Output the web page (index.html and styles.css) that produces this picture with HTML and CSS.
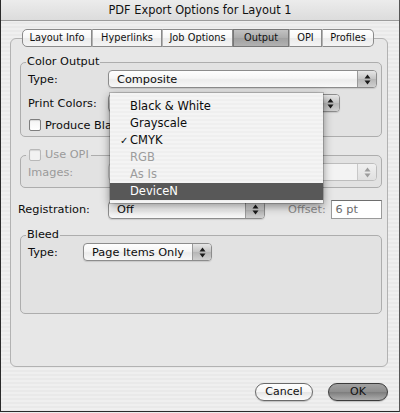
FILE: index.html
```html
<!DOCTYPE html>
<html>
<head>
<meta charset="utf-8">
<title>PDF Export Options for Layout 1</title>
<link rel="stylesheet" href="styles.css">
</head>
<body>
<div class="window">
  <div class="titlebar">PDF Export Options for Layout 1</div>
  <div class="content">
    <div class="tabs">
      <span class="tab first t-layout">Layout Info</span>
      <span class="tab t-hyper">Hyperlinks</span>
      <span class="tab t-job">Job Options</span>
      <span class="tab sel t-output">Output</span>
      <span class="tab t-opi">OPI</span>
      <span class="tab last t-prof">Profiles</span>
    </div>
    <div class="panel">
      <fieldset class="group g-color">
        <legend>Color Output</legend>
        <div class="row r-first">
          <span class="lbl">Type:</span>
          <div class="popup grow"><span class="ptext">Composite</span><span class="arrows"><svg width="7" height="11" viewBox="0 0 7 11"><path d="M3.5 0.5 L6.5 4.5 H0.5Z M3.5 10.5 L6.5 6.5 H0.5Z"/></svg></span></div>
        </div>
        <div class="row r-next">
          <span class="lbl">Print Colors:</span>
          <div class="popup w-print"><span class="ptext"></span><span class="arrows"><svg width="7" height="11" viewBox="0 0 7 11"><path d="M3.5 0.5 L6.5 4.5 H0.5Z M3.5 10.5 L6.5 6.5 H0.5Z"/></svg></span></div>
        </div>
        <div class="check-row">
          <span class="checkbox"></span><span>Produce Bla</span>
        </div>
      </fieldset>

      <fieldset class="group g-opi">
        <legend class="legend-check"><span class="checkbox dis"></span><span class="dis-text">Use OPI</span></legend>
        <div class="row r-first">
          <span class="lbl dis-text">Images:</span>
          <div class="popup grow disabled"><span class="ptext"></span><span class="arrows"><svg width="7" height="11" viewBox="0 0 7 11"><path d="M3.5 0.5 L6.5 4.5 H0.5Z M3.5 10.5 L6.5 6.5 H0.5Z"/></svg></span></div>
        </div>
      </fieldset>

      <div class="reg-row">
        <span class="lbl lbl-reg">Registration:</span>
        <div class="popup w-off"><span class="ptext">Off</span><span class="arrows"><svg width="7" height="11" viewBox="0 0 7 11"><path d="M3.5 0.5 L6.5 4.5 H0.5Z M3.5 10.5 L6.5 6.5 H0.5Z"/></svg></span></div>
        <span class="offset-lbl">Offset:</span>
        <div class="field">6 pt</div>
      </div>

      <fieldset class="group g-bleed">
        <legend>Bleed</legend>
        <div class="row r-first">
          <span class="lbl lbl-short">Type:</span>
          <div class="popup w-bleed"><span class="ptext">Page Items Only</span><span class="arrows"><svg width="7" height="11" viewBox="0 0 7 11"><path d="M3.5 0.5 L6.5 4.5 H0.5Z M3.5 10.5 L6.5 6.5 H0.5Z"/></svg></span></div>
        </div>
      </fieldset>
    </div>
    <div class="buttons">
      <button class="btn b-cancel">Cancel</button>
      <button class="btn default b-ok">OK</button>
    </div>
  </div>

  <div class="menu">
    <div class="item">Black &amp; White</div>
    <div class="item">Grayscale</div>
    <div class="item"><span class="check">✓</span>CMYK</div>
    <div class="item dis">RGB</div>
    <div class="item dis">As Is</div>
    <div class="item hl">DeviceN</div>
  </div>
</div>
</body>
</html>
```

FILE: styles.css
```css
* { box-sizing: border-box; }

html, body {
  margin: 0;
  padding: 0;
  background: #ececec;
}

body {
  font-family: "DejaVu Sans", "Liberation Sans", sans-serif;
  font-size: 11.3px;
  color: #0c0c0c;
}

.window {
  position: relative;
  width: 400px;
  height: 412px;
  border-left: 1px solid #2a2a2a;
  border-right: 1px solid #555;
  border-bottom: 1px solid #2a2a2a;
  background: repeating-linear-gradient(to bottom, #efefef 0 2px, #e9e9e9 2px 4px);
  display: flex;
  flex-direction: column;
}

.titlebar {
  height: 21px;
  line-height: 20px;
  text-align: center;
  font-size: 11.4px;
  color: #111;
  background: linear-gradient(#ececec, #dcdcdc);
  border-bottom: 1px solid #9c9c9c;
}

.content {
  padding: 8px 11px 0 9px;
  display: flex;
  flex-direction: column;
}

/* Tabs */
.tabs {
  display: flex;
  justify-content: center;
  padding-right: 2px;
  height: 18px;
  margin-bottom: -9px;
  position: relative;
  z-index: 1;
}

.tab {
  height: 18px;
  line-height: 16px;
  font-size: 9.8px;
  text-align: center;
  border: 1px solid #8a8a8a;
  border-left: 1px solid #b4b4b4;
  background: linear-gradient(#ffffff, #f6f6f6 50%, #ebebeb 52%, #f4f4f4);
  color: #111;
}
.tab.first { border-left: 1px solid #8a8a8a; border-radius: 5px 0 0 5px; }
.tab.last { border-radius: 0 5px 5px 0; }
.tab.sel {
  background: linear-gradient(#c2c2c2, #ababab 50%, #a0a0a0 52%, #b2b2b2);
  border-color: #777;
}
.t-layout { width: 70px; }
.t-hyper { width: 70px; }
.t-job { width: 71px; }
.t-output { width: 56px; }
.t-opi { width: 33px; }
.t-prof { width: 52px; }

/* Panel */
.panel {
  height: 329px;
  border: 1px solid #b2b2b2;
  border-radius: 6px;
  background: #e7e7e7;
  padding: 16px 5px 0 9px;
}

fieldset.group {
  margin: 0;
  min-width: 0;
  border: 1px solid #adadad;
  border-radius: 5px;
  background: #e2e2e2;
  padding: 0 4px 4px 7px;
}

fieldset.group legend {
  padding: 0 1px;
  margin-left: -2px;
  height: 14px;
  line-height: 14px;
}

.legend-check {
  display: flex;
  align-items: center;
}
fieldset.group legend.legend-check { padding: 0 2px 0 3px; }
.legend-check .checkbox { margin-right: 4px; }

.g-opi { margin-top: 11px !important; padding-bottom: 6px !important; }
.g-bleed { margin-top: 9px !important; padding-bottom: 52px !important; }

.row {
  display: flex;
  align-items: center;
  height: 18px;
}
.r-first { margin-top: 1px; }
.r-next { margin-top: 6px; }

.lbl { width: 80px; flex: none; }
.lbl-short { width: 55px; }
.lbl-reg { width: 90px; }

.dis-text { color: #9a9a9a; }

.check-row {
  display: flex;
  align-items: center;
  height: 14px;
  margin-top: 6px;
}
.check-row .checkbox { margin-left: 1px; margin-right: 4px; }

.checkbox {
  display: inline-block;
  width: 12px;
  height: 12px;
  border: 1px solid #7e7e7e;
  border-radius: 2px;
  background: linear-gradient(#f4f4f4, #ffffff);
  box-shadow: inset 0 1px 1px rgba(0,0,0,0.12);
  flex: none;
}
.checkbox.dis { border-color: #b8b8b8; background: #f2f2f2; }

/* Popup buttons */
.popup {
  height: 18px;
  border: 1px solid #8c8c8c;
  border-radius: 4px;
  display: flex;
  align-items: center;
  background: linear-gradient(#fefefe, #f6f6f6 45%, #ececec 55%, #f8f8f8);
  box-shadow: 0 1px 1px rgba(0,0,0,0.12);
  flex: none;
}
.popup.grow { flex: 1; }
.ptext { flex: 1; padding-left: 8px; white-space: nowrap; overflow: hidden; }
.arrows {
  width: 19px;
  align-self: stretch;
  border-left: 1px solid #9a9a9a;
  border-radius: 0 3px 3px 0;
  background: linear-gradient(#e6e6e6, #c4c4c4 50%, #b6b6b6 52%, #cfcfcf);
  display: flex;
  align-items: center;
  justify-content: center;
}
.arrows svg { fill: #1a1a1a; display: block; }

.popup.disabled { border-color: #bdbdbd; background: #f3f3f3; box-shadow: none; }
.popup.disabled .arrows { background: linear-gradient(#f0f0f0, #e0e0e0); border-left-color: #c8c8c8; }
.popup.disabled .arrows svg { fill: #9c9c9c; }

.w-print { width: 232px; }
.w-off { width: 157px; }
.w-bleed { width: 129px; }

.reg-row {
  display: flex;
  align-items: center;
  height: 19px;
  margin-top: 12px;
  margin-left: -2px;
}
.offset-lbl {
  margin-left: 23px;
  width: 43px;
  color: #8a8a8a;
}
.field {
  width: 52px;
  height: 19px;
  line-height: 17px;
  border: 1px solid #9a9a9a;
  border-top-color: #6e6e6e;
  background: #fff;
  padding-left: 4px;
  color: #6a6a6a;
}

/* Buttons */
.buttons {
  display: flex;
  justify-content: flex-end;
  gap: 15px;
  margin-top: 16px;
}
.btn {
  height: 18px;
  padding: 0;
  border-radius: 9px;
  border: 1px solid #6a6a6a;
  font-family: "DejaVu Sans", sans-serif;
  font-size: 11px;
  line-height: 16px;
  text-align: center;
  color: #111;
  background: linear-gradient(#ffffff, #f5f5f5 50%, #e6e6e6 52%, #fbfbfb);
  box-shadow: 0 1px 1px rgba(0,0,0,0.2);
}
.btn.default {
  background: linear-gradient(#a2a2a2, #8e8e8e 50%, #7e7e7e 52%, #adadad);
  border-color: #3c3c3c;
}
.b-cancel { width: 58px; }
.b-ok { width: 60px; }

/* Popup menu (overlay) */
.menu {
  position: absolute;
  left: 109px;
  top: 93px;
  width: 213px;
  height: 110px;
  padding-top: 5px;
  background: repeating-linear-gradient(to bottom, #f4f4f4 0 2px, #efefef 2px 4px);
  box-shadow: 0 3px 9px rgba(0,0,0,0.45), 0 0 0 1px rgba(0,0,0,0.18);
  font-size: 11.5px;
  z-index: 5;
}
.item {
  position: relative;
  height: 17px;
  line-height: 17px;
  padding-left: 20px;
  color: #0c0c0c;
}
.item .check {
  position: absolute;
  left: 10px;
  font-size: 10px;
  font-weight: bold;
}
.item.dis { color: #9c9c9c; }
.item.hl { background: #585858; color: #fff; }
```
